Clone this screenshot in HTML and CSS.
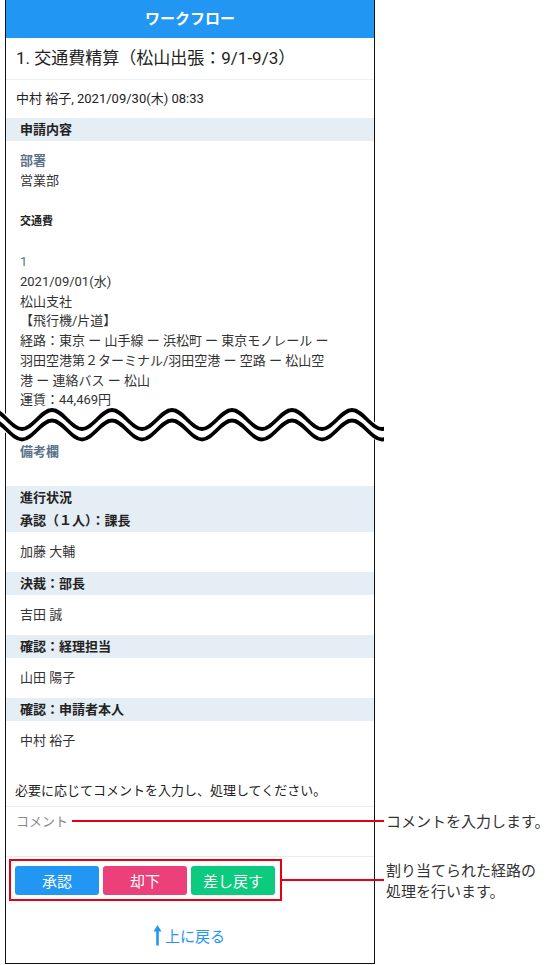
FILE: index.html
```html
<!DOCTYPE html>
<html lang="ja">
<head>
<meta charset="utf-8">
<title>ワークフロー</title>
<link rel="stylesheet" href="styles.css">
</head>
<body>
<div class="page">
  <div class="phone">
    <header class="appbar">ワークフロー</header>
    <div class="title">1. 交通費精算（松山出張：9/1-9/3）</div>
    <div class="meta">中村 裕子, 2021/09/30(木) 08:33</div>
    <div class="bar">申請内容</div>
    <div class="fields">
      <div class="label strong">部署</div>
      <div class="line">営業部</div>
      <div class="subhead">交通費</div>
      <div class="label num">1</div>
      <div class="line">2021/09/01(水)</div>
      <div class="line">松山支社</div>
      <div class="line">【飛行機/片道】</div>
      <div class="line">経路：東京 ー 山手線 ー 浜松町 ー 東京モノレール ー</div>
      <div class="line">羽田空港第２ターミナル/羽田空港 ー 空路 ー 松山空</div>
      <div class="line">港 ー 連絡バス ー 松山</div>
      <div class="line">運賃：44,469円</div>
      <div class="label strong remark">備考欄</div>
    </div>
    <div class="bar bar2">
      <div>進行状況</div>
      <div>承認（１人）：課長</div>
    </div>
    <div class="person">加藤 大輔</div>
    <div class="bar">決裁：部長</div>
    <div class="person">吉田 誠</div>
    <div class="bar">確認：経理担当</div>
    <div class="person">山田 陽子</div>
    <div class="bar">確認：申請者本人</div>
    <div class="person">中村 裕子</div>
    <div class="instruction">必要に応じてコメントを入力し、処理してください。</div>
    <div class="comment"><span class="placeholder">コメント</span></div>
    <div class="actions">
      <button class="btn approve">承認</button>
      <button class="btn reject">却下</button>
      <button class="btn sendback">差し戻す</button>
    </div>
    <div class="backtop">
      <svg class="arrow" width="9" height="22" viewBox="0 0 9 22">
        <path d="M4.5 1 L8.5 7.5 L5.8 7.5 L5.8 21.5 L3.2 21.5 L3.2 7.5 L0.5 7.5 Z" fill="#2196f3"/>
      </svg>
      <span>上に戻る</span>
    </div>
  </div>

  <svg class="wave" width="384" height="50" viewBox="0 0 384 50">
    <defs>
      <path id="wv" d="M-38 25 C-27 25 -19 6 -8 6 C3 6 11 25 22 25 C33 25 41 6 52 6 C63 6 71 25 82 25 C93 25 101 6 112 6 C123 6 131 25 142 25 C153 25 161 6 172 6 C183 6 191 25 202 25 C213 25 221 6 232 6 C243 6 251 25 262 25 C273 25 281 6 292 6 C303 6 311 25 322 25 C333 25 341 6 352 6 C363 6 371 25 382 25 C393 25 401 6 412 6"/>
    </defs>
    <g fill="none">
      <use href="#wv" stroke="#fff" stroke-width="14" transform="translate(0,5)"/>
      <use href="#wv" stroke="#000" stroke-width="3.8"/>
      <use href="#wv" stroke="#000" stroke-width="3.8" transform="translate(0,10.5)"/>
    </g>
  </svg>

  <div class="callout-line line-comment"></div>
  <div class="callout-text text-comment">コメントを入力します。</div>
  <div class="callout-box"></div>
  <div class="callout-line line-actions"></div>
  <div class="callout-text text-actions">割り当てられた経路の<br>処理を行います。</div>
</div>
</body>
</html>
```

FILE: styles.css
```css
* { box-sizing: border-box; }
html, body { margin: 0; padding: 0; background: #fff; }
body { font-family: Roboto, "Noto Sans CJK JP", sans-serif; color: #333; }

.page { position: relative; width: 552px; height: 965px; overflow: hidden; }

.phone {
  margin-left: 5px;
  width: 370px;
  height: 964px;
  border: 1px solid #111;
  border-top: none;
  display: flex;
  flex-direction: column;
  background: #fff;
}

.appbar {
  height: 38px;
  background: #2196f3;
  color: #fff;
  font-weight: bold;
  font-size: 15px;
  line-height: 38px;
  text-align: center;
  flex: none;
}

.title {
  height: 42px;
  line-height: 41px;
  font-size: 17px;
  padding-left: 10px;
  border-bottom: 1px solid #edf0f3;
  color: #222;
  flex: none;
}

.meta {
  height: 38px;
  line-height: 38px;
  font-size: 13px;
  padding-left: 10px;
  color: #222;
  flex: none;
}

.bar {
  background: #e5edf5;
  height: 23px;
  line-height: 23px;
  font-size: 13px;
  font-weight: bold;
  padding-left: 14px;
  color: #222;
  flex: none;
}
.bar2 { height: 46px; }

.fields {
  padding: 10px 14px 24px;
  font-size: 13px;
  flex: none;
}
.label { color: #5b7189; line-height: 20px; }
.strong { font-weight: bold; }
.line { line-height: 19.75px; color: #333; }
.subhead { font-size: 11px; font-weight: bold; line-height: 20px; margin-top: 21px; color: #222; }
.num { margin-top: 20px; }
.remark { margin-top: 32px; }

.person {
  height: 40px;
  line-height: 40px;
  font-size: 13px;
  padding-left: 14px;
  color: #333;
  flex: none;
}

.instruction {
  padding: 20px 0 5px 9px;
  line-height: 20px;
  font-size: 13px;
  color: #222;
  flex: none;
}

.comment {
  height: 51px;
  border-top: 1px solid #e8ecf0;
  border-bottom: 1px solid #e8ecf0;
  padding: 6px 0 0 10px;
  flex: none;
}
.placeholder { font-size: 13px; line-height: 18px; color: #888; display: block; }

.actions {
  display: flex;
  gap: 4px;
  padding: 9px 0 0 9px;
  flex: none;
}
.btn {
  width: 84px;
  height: 29px;
  border: none;
  border-radius: 3px;
  color: #fff;
  font-family: Roboto, "Noto Sans CJK JP", sans-serif;
  font-size: 15px;
  padding: 0;
}
.approve { background: #2196f3; }
.reject { background: #eb4079; }
.sendback { background: #0ccb7f; }

.backtop {
  margin-top: 30px;
  display: flex;
  justify-content: center;
  align-items: center;
  gap: 3px;
  color: #2196f3;
  font-size: 15px;
  padding-right: 2px;
}
.arrow { display: block; margin-top: -2px; }

.wave { position: absolute; left: 0; top: 404px; }

.callout-line { position: absolute; height: 2px; background: #e60012; }
.line-comment { left: 72px; top: 820px; width: 312px; }
.line-actions { left: 281px; top: 879px; width: 103px; }
.callout-box {
  position: absolute;
  left: 9px; top: 859px;
  width: 273px; height: 42px;
  border: 2px solid #e60012;
}
.callout-text {
  position: absolute;
  left: 386px;
  font-family: "Noto Sans CJK JP", sans-serif;
  font-size: 15px;
  color: #333;
}
.text-comment { top: 810px; line-height: 22px; }
.text-actions { top: 859px; line-height: 21px; }
```
